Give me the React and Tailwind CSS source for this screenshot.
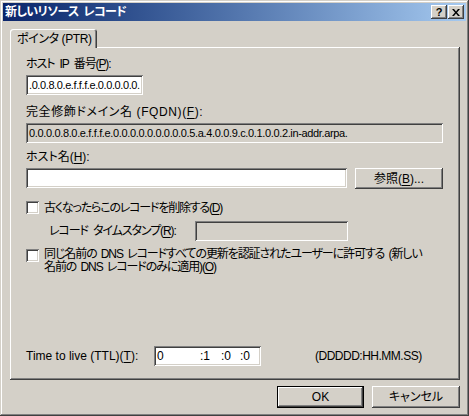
import React from 'react';

// Win2k classic bevels
const RAISED = 'shadow-[inset_-1px_-1px_#404040,inset_1px_1px_#ffffff,inset_-2px_-2px_#808080,inset_2px_2px_#d4d0c8]';
const SUNKEN = 'shadow-[inset_1px_1px_#808080,inset_-1px_-1px_#ffffff,inset_2px_2px_#404040,inset_-2px_-2px_#d4d0c8]';

const Field = ({ className = '', children, readOnly }) => (
  <div className={`h-[20px] flex items-center px-[3px] overflow-hidden whitespace-nowrap ${readOnly ? 'bg-[#d4d0c8]' : 'bg-white'} ${SUNKEN} ${className}`}>
    {children}
  </div>
);

const Check = () => <div className={`w-[13px] h-[13px] shrink-0 bg-white ${SUNKEN}`}></div>;

const U = ({ children }) => <span className="underline underline-offset-2">{children}</span>;

const Button = ({ className = '', children }) => (
  <div className={`h-[21px] flex items-center justify-center bg-[#d4d0c8] ${RAISED} ${className}`}>{children}</div>
);

export default function App() {
  return (
    <div
      className="w-[469px] h-[416px] bg-[#d4d0c8] p-[3px] text-[12px] text-black [font-feature-settings:'palt'] shadow-[inset_-1px_-1px_#404040,inset_1px_1px_#d4d0c8,inset_-2px_-2px_#808080,inset_2px_2px_#ffffff] overflow-hidden"
      style={{ fontFamily: '"Liberation Sans", "Noto Sans CJK JP", sans-serif' }}
    >
      {/* title bar */}
      <div className="h-[18px] flex items-center justify-between pl-[2px] pr-[2px] bg-gradient-to-r from-[#0a246a] to-[#a6caf0]">
        <span className="text-white font-bold text-[12px] leading-none tracking-[-0.6px] [word-spacing:2px]">新しいリソース レコード</span>
        <div className="flex gap-[1px]">
          <div className={`w-[16px] h-[14px] flex items-center justify-center bg-[#d4d0c8] font-bold text-[11px] leading-none ${RAISED}`}>?</div>
          <div className={`w-[16px] h-[14px] flex items-center justify-center bg-[#d4d0c8] ${RAISED}`}>
            <svg width="8" height="7" viewBox="0 0 8 7">
              <path d="M0 0h2l2 2.5L6 0h2L5 3.5 8 7H6L4 4.5 2 7H0l3-3.5z" fill="#000" />
            </svg>
          </div>
        </div>
      </div>

      <div className="pl-[7px] pt-[8px] pr-[5px]">
        {/* tab */}
        <div className="relative z-10 w-[87px] h-[19px] -mb-[1px] bg-[#d4d0c8] rounded-t-[3px] shadow-[inset_1px_1px_#ffffff,inset_-1px_0_#404040,inset_-2px_0_#808080] flex items-center pl-[7px] tracking-[-0.4px]">
          ポインタ (PTR)
        </div>

        {/* panel */}
        <div className={`w-[450px] h-[333px] pl-[16px] pt-[11px] flex flex-col ${RAISED}`}>
          <div className="h-[13px] leading-[13px] tracking-[-1.1px] [word-spacing:3px] whitespace-nowrap">ホスト IP 番号(<U>P</U>):</div>
          <Field className="w-[117px] mt-[4px] text-[11px] tracking-[-0.4px]">.0.0.8.0.e.f.f.f.e.0.0.0.0.0.</Field>

          <div className="h-[13px] leading-[13px] mt-[11px] tracking-[0.6px] whitespace-nowrap">完全修飾ドメイン名 (FQDN)(<U>F</U>):</div>
          <Field readOnly className="w-[417px] mt-[4px] text-[11px] tracking-[-0.35px]">
            0.0.0.0.8.0.e.f.f.f.e.0.0.0.0.0.0.0.0.0.5.a.4.0.0.9.c.0.1.0.0.2.in-addr.arpa.
          </Field>

          <div className="h-[13px] leading-[13px] mt-[8px]">ホスト名(<U>H</U>):</div>
          <div className="flex mt-[4px] gap-[8px]">
            <Field className="w-[321px]"></Field>
            <Button className="w-[88px] h-[20px]">参照(<U>B</U>)...</Button>
          </div>

          <div className="flex items-center gap-[5px] mt-[12px] h-[13px]">
            <Check />
            <span className="whitespace-nowrap tracking-[-1.2px]">古くなったらこのレコードを削除する(<U>D</U>)</span>
          </div>

          <div className="flex items-center mt-[7px] h-[20px] pl-[23px]">
            <span className="w-[146px] shrink-0 whitespace-nowrap tracking-[-1.1px] [word-spacing:3px]">レコード タイムスタンプ(<U>R</U>):</span>
            <Field readOnly className="w-[153px]"></Field>
          </div>

          <div className="flex items-start gap-[5px] mt-[7px]">
            <div className="pt-[1px]"><Check /></div>
            <div className="leading-[13px] whitespace-nowrap tracking-[-1.1px] [word-spacing:2px]">
              同じ名前の DNS レコードすべての更新を認証されたユーザーに許可する (新しい
              <br />
              名前の DNS レコードのみに適用)(<U>O</U>)
            </div>
          </div>

          <div className="flex-1"></div>

          <div className="flex items-center h-[20px] mb-[14px]">
            <span className="w-[128px]">Time to live (TTL)(<U>T</U>):</span>
            <Field className="w-[107px]">
              <span className="w-[43px]">0</span>
              <span className="w-[21px]">:1</span>
              <span className="w-[19px]">:0</span>
              <span>:0</span>
            </Field>
            <span className="ml-[54px] tracking-[-0.5px]">(DDDDD:HH.MM.SS)</span>
          </div>
        </div>

        {/* buttons */}
        <div className="flex justify-end gap-[8px] mt-[6px] w-[450px]">
          <div className="w-[87px] h-[22px] border border-black">
            <Button className="w-full h-full">OK</Button>
          </div>
          <Button className="w-[88px] h-[22px]">キャンセル</Button>
        </div>
      </div>
    </div>
  );
}
